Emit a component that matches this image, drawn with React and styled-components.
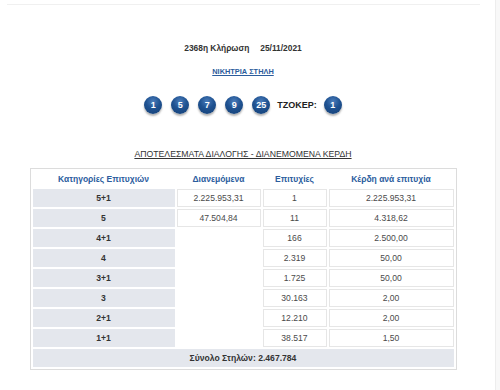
import React from "react";
import styled, { createGlobalStyle } from "styled-components";

const Global = createGlobalStyle`
  html, body { margin: 0; padding: 0; background: #fff; }
  body { font-family: "Liberation Sans", Arial, sans-serif; color: #333; }
`;

const Page = styled.div`
  display: flex;
  width: 500px;
  height: 390px;
  overflow: hidden;
`;

const Main = styled.div`
  width: 486px;
  display: flex;
  flex-direction: column;
  align-items: center;
`;

const Rail = styled.div`
  margin-left: 9px;
  width: 4px;
  border-left: 1px solid #ededed;
  background: #f8f8f8;
`;

const TopRule = styled.div`
  align-self: flex-start;
  margin: 4px 0 0 7px;
  width: 473px;
  height: 1px;
  background: #f0f0f0;
`;

const DrawTitle = styled.div`
  margin-top: 38px;
  display: flex;
  gap: 11px;
  font-size: 8.4px;
  font-weight: bold;
  color: #333;
  line-height: 11px;
`;

const WinLink = styled.a`
  margin-top: 13px;
  font-size: 7.4px;
  font-weight: bold;
  color: #2b5c9c;
  text-decoration: underline;
  line-height: 10px;
`;

const Balls = styled.div`
  margin-top: 19px;
  display: flex;
  align-items: center;
  gap: 9px;
`;

const Ball = styled.div`
  width: 18px;
  height: 18px;
  border-radius: 50%;
  background: radial-gradient(circle at 50% 30%, #4a7cba 0%, #1f5291 45%, #143f74 100%);
  box-shadow: 0 2px 2px rgba(0, 0, 0, 0.3);
  color: #fff;
  font-size: 9px;
  font-weight: bold;
  display: flex;
  align-items: center;
  justify-content: center;
`;

const JokerLabel = styled.span`
  font-size: 9px;
  font-weight: bold;
  color: #222;
  margin: 0 -2px 0 -2px;
`;

const Heading = styled.div`
  margin-top: 35px;
  font-size: 8.7px;
  color: #333;
  text-decoration: underline;
  line-height: 11px;
`;

const Table = styled.table`
  margin-top: 8px;
  width: 426px;
  border: 1px solid #dcdcdc;
  border-collapse: separate;
  border-spacing: 2px;
  font-size: 8.6px;
  color: #444;
  table-layout: fixed;
`;

const Th = styled.th`
  height: 16px;
  padding: 0;
  font-weight: bold;
  color: #2c5d9e;
  font-size: 8.5px;
  text-align: center;
`;

const Td = styled.td`
  height: 16px;
  padding: 0;
  text-align: center;
  border: 1px solid ${(p) => (p.$blank ? "transparent" : p.$grey ? "#e4e7ed" : "#e6e6e6")};
  background: ${(p) => (p.$grey ? "#e4e7ed" : "#fff")};
  font-weight: ${(p) => (p.$bold ? "bold" : "normal")};
  color: ${(p) => (p.$bold ? "#333" : "#4a4a4a")};
`;

const rows = [
  ["5+1", "2.225.953,31", "1", "2.225.953,31"],
  ["5", "47.504,84", "11", "4.318,62"],
  ["4+1", "", "166", "2.500,00"],
  ["4", "", "2.319", "50,00"],
  ["3+1", "", "1.725", "50,00"],
  ["3", "", "30.163", "2,00"],
  ["2+1", "", "12.210", "2,00"],
  ["1+1", "", "38.517", "1,50"],
];

export default function App() {
  return (
    <>
      <Global />
      <Page>
        <Main>
          <TopRule />
          <DrawTitle>
            <span>2368η Κλήρωση</span>
            <span>25/11/2021</span>
          </DrawTitle>
          <WinLink>ΝΙΚΗΤΡΙΑ ΣΤΗΛΗ</WinLink>
          <Balls>
            {["1", "5", "7", "9", "25"].map((n) => (
              <Ball key={n}>{n}</Ball>
            ))}
            <JokerLabel>ΤΖΟΚΕΡ:</JokerLabel>
            <Ball>1</Ball>
          </Balls>
          <Heading>ΑΠΟΤΕΛΕΣΜΑΤΑ ΔΙΑΛΟΓΗΣ - ΔΙΑΝΕΜΟΜΕΝΑ ΚΕΡΔΗ</Heading>
          <Table>
            <colgroup>
              <col style={{ width: "142px" }} />
              <col style={{ width: "84px" }} />
              <col style={{ width: "64px" }} />
              <col style={{ width: "125px" }} />
            </colgroup>
            <thead>
              <tr>
                <Th>Κατηγορίες Επιτυχιών</Th>
                <Th>Διανεμόμενα</Th>
                <Th>Επιτυχίες</Th>
                <Th>Κέρδη ανά επιτυχία</Th>
              </tr>
            </thead>
            <tbody>
              {rows.map((r) => (
                <tr key={r[0]}>
                  <Td $grey $bold>{r[0]}</Td>
                  <Td $blank={!r[1]}>{r[1]}</Td>
                  <Td>{r[2]}</Td>
                  <Td>{r[3]}</Td>
                </tr>
              ))}
              <tr>
                <Td $grey $bold colSpan={4}>Σύνολο Στηλών: 2.467.784</Td>
              </tr>
            </tbody>
          </Table>
        </Main>
        <Rail />
      </Page>
    </>
  );
}
